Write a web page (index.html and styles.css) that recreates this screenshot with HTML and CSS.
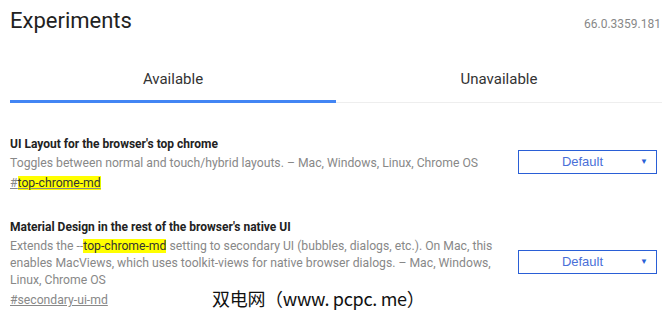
FILE: index.html
```html
<!DOCTYPE html>
<html>
  <head>
    <title>Experiments</title>
    <link rel="stylesheet" href="styles.css">
  </head>
  <body>
    <div class="page">
      <header class="header">
        <h1 class="title">Experiments</h1>
        <span class="version">66.0.3359.181</span>
      </header>

      <div class="tabs">
        <div class="tab tab-active">Available</div>
        <div class="tab">Unavailable</div>
      </div>

      <div class="experiment">
        <div class="experiment-text">
          <h3 class="experiment-name">UI Layout for the browser's top chrome</h3>
          <p class="experiment-desc">Toggles between normal and touch/hybrid layouts. – Mac, Windows, Linux, Chrome OS</p>
          <a class="permalink" href="#top-chrome-md">#<mark>top-chrome-md</mark></a>
        </div>
        <div class="experiment-actions">
          <div class="select">Default<span class="arrow">&#9660;</span></div>
        </div>
      </div>

      <div class="experiment">
        <div class="experiment-text">
          <h3 class="experiment-name">Material Design in the rest of the browser's native UI</h3>
          <p class="experiment-desc">Extends the --<mark>top-chrome-md</mark> setting to secondary UI (bubbles, dialogs, etc.). On Mac, this enables MacViews, which uses toolkit-views for native browser dialogs. – Mac, Windows, Linux, Chrome OS</p>
          <a class="permalink" href="#secondary-ui-md">#secondary-ui-md</a>
        </div>
        <div class="experiment-actions">
          <div class="select">Default<span class="arrow">&#9660;</span></div>
        </div>
      </div>
    </div>

    <div class="watermark">双电网（www. pcpc. me）</div>
  </body>
</html>
```

FILE: styles.css
```css
/* Page basics */
body {
  margin: 0;
  font-family: Roboto, "Liberation Sans", sans-serif;
  color: #333;
  background: #fff;
}

.page {
  padding: 0 8px 0 10px;
}

/* Header with title and version */
.header {
  display: flex;
  justify-content: space-between;
  align-items: baseline;
  padding-top: 6px;
}

.title {
  margin: 0;
  font-size: 22px;
  font-weight: 400;
  color: #222;
  line-height: 30px;
}

.version {
  font-size: 12px;
  color: #888;
  margin-right: 1px;
}

/* Tabs */
.tabs {
  display: flex;
  margin-top: 23px;
  border-bottom: 1px solid #eee;
}

.tab {
  flex: 1;
  text-align: center;
  font-size: 15px;
  color: #333;
  padding: 11px 0 14px;
  margin-bottom: -1px;
}

.tab-active {
  border-bottom: 3px solid #4285f4;
  padding-bottom: 12px;
}

/* Experiment rows */
.experiment {
  display: flex;
  justify-content: space-between;
  align-items: center;
  margin-top: 33px;
}

.experiment + .experiment {
  margin-top: 27px;
}

.experiment-text {
  width: 492px;
}

.experiment-name {
  margin: 0;
  font-size: 12px;
  font-weight: 700;
  color: #222;
  line-height: 17px;
}

.experiment-desc {
  margin: 2px 0 0;
  font-size: 12.2px;
  color: #888;
  line-height: 17px;
}

.permalink {
  display: inline-block;
  margin-top: 3px;
  font-size: 12.2px;
  color: #888;
  line-height: 17px;
}

mark {
  background: #ffff00;
  color: #333;
  line-height: 15px;
}

.experiment-actions {
  padding-right: 5px;
  padding-bottom: 5px;
}

/* Fake select dropdown */
.select {
  position: relative;
  width: 127px;
  height: 22px;
  padding-right: 10px;
  border: 1px solid #2a5fd6;
  font-family: "Liberation Sans", Arial, sans-serif;
  font-size: 13px;
  color: #4a6fd8;
  line-height: 22px;
  text-align: center;
  box-sizing: content-box;
}

.arrow {
  position: absolute;
  right: 8px;
  top: 0;
  font-size: 8px;
  color: #2a5fd6;
}

/* Site watermark over the screenshot */
.watermark {
  position: absolute;
  left: 212px;
  top: 285px;
  font-family: "Noto Sans CJK SC", sans-serif;
  font-size: 18px;
  color: #111;
  letter-spacing: -0.3px;
  text-shadow: -1px -1px 0 #fff, 1px -1px 0 #fff, -1px 1px 0 #fff, 1px 1px 0 #fff;
}
```
